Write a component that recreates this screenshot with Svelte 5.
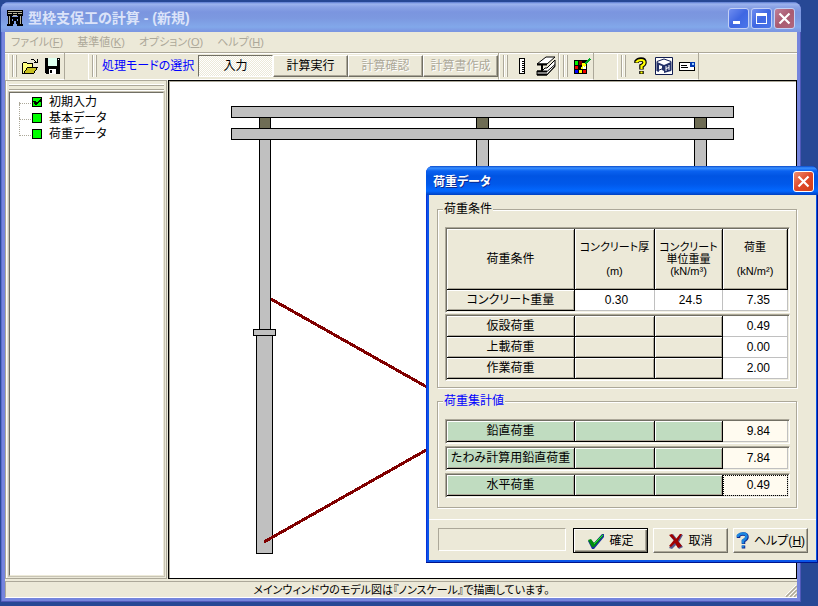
<script>
  const menus = [
    { name: 'ファイル', key: 'F' },
    { name: '基準値', key: 'K' },
    { name: 'オプション', key: 'O' },
    { name: 'ヘルプ', key: 'H' }
  ];
  const modes = [
    { name: '入力', active: true },
    { name: '計算実行' },
    { name: '計算確認', disabled: true },
    { name: '計算書作成', disabled: true }
  ];
  const tree = [
    { name: '初期入力', done: true },
    { name: '基本データ', done: false },
    { name: '荷重データ', done: false }
  ];
  const loads = $state([
    { name: '仮設荷重', value: '0.49' },
    { name: '上載荷重', value: '0.00' },
    { name: '作業荷重', value: '2.00' }
  ]);
  const concrete = $state({ thickness: '0.30', unit: '24.5', load: '7.35' });
  const totals = [
    { name: '鉛直荷重', value: '9.84' },
    { name: 'たわみ計算用鉛直荷重', value: '7.84' },
    { name: '水平荷重', value: '0.49', focused: true }
  ];
</script>

{#snippet columns()}
  <colgroup><col class="c-name" /><col class="c-a" /><col class="c-b" /><col /></colgroup>
{/snippet}

<div class="desktop">
  <main class="window">
    <header class="titlebar">
      <svg class="app-icon" width="16" height="16" viewBox="0 0 16 16" shape-rendering="crispEdges" aria-hidden="true">
        <path fill="#000" d="M0 0h16v6H0zM1 6h4v10H1zM11 6h4v10h-4zM5 7h6v2H5zM6 9h4v2H6zM5 11h2v3H5zM9 11h2v3H9zM0 14h6v2H0zM10 14h6v2h-6z" />
        <path fill="#b9b49c" d="M1 1h14v1H1zM1 3h4v1H1zM6 3h4v1H6zM11 3h4v1h-4zM2 6h1v8H2zM13 6h1v8h-1zM6 5h4v1H6z" />
      </svg>
      <h1>型枠支保工の計算 - (新規)</h1>
      <div class="caption">
        <button aria-label="最小化"><svg width="19" height="19" viewBox="0 0 19 19"><path fill="#fff" d="M4 12h7v3H4z" /></svg></button>
        <button aria-label="最大化"><svg width="19" height="19" viewBox="0 0 19 19" shape-rendering="crispEdges"><path fill="#fff" fill-rule="evenodd" d="M4 4h11v11H4zM5 7v7h9V7z" /></svg></button>
        <button class="close" aria-label="閉じる"><svg width="19" height="19" viewBox="0 0 19 19"><path stroke="#fff" stroke-width="2.2" d="M4.500 4.500l10 10M14.500 4.500l-10 10" /></svg></button>
      </div>
    </header>

    <div class="client">
      <nav class="menu">
        {#each menus as m}
          <button disabled>{m.name}(<u>{m.key}</u>)</button>
        {/each}
      </nav>

      <div class="toolbars">
        <div class="bar first">
          <span class="grip"></span>
          <button class="tool" aria-label="開く">
            <svg width="18" height="18" viewBox="0 0 18 18" shape-rendering="crispEdges">
              <path fill="#ffff80" d="M1 6h4v1h6v4h4l-4 5H1z" />
              <path fill="#c8c020" d="M5 11h10l-3 5H2z" />
              <path fill="none" stroke="#000" d="M.5 16.500v-10l1-1h3l1 1h5v4M.5 16.500h11l4-6h-10l-4 6M8.500 2.500h3l3 3M15.500 2v4M12 5.500h3" />
            </svg>
          </button>
          <button class="tool" aria-label="保存">
            <svg width="18" height="18" viewBox="0 0 18 18" shape-rendering="crispEdges">
              <path fill="#000" d="M1 1h15v16H2l-1-1z" /><path fill="#dfe" d="M4 1h9v8H4z" /><path fill="#fff" d="M5 12h7v5H5zM14 2h1v1h-1z" /><path fill="#000" d="M6 13h2v3H6z" />
            </svg>
          </button>
        </div>

        <div class="bar">
          <span class="grip"></span>
          <span class="caption-text">処理モードの選択</span>
          {#each modes as m}
            <button class="mode" class:active={m.active} disabled={m.disabled}>{m.name}</button>
          {/each}
        </div>

        <div class="bar">
          <span class="grip"></span>
          <button class="tool" aria-label="寸法">
            <svg width="18" height="18" viewBox="0 0 18 18" shape-rendering="crispEdges">
              <path fill="#fff" stroke="#000" d="M6.500 1.500h5v15h-5z" /><path stroke="#000" d="M9 4.500h2M9 6.500h2M9 8.500h2M9 10.500h2M9 12.500h2M9 14.500h2" />
            </svg>
          </button>
          <button class="tool wide" aria-label="鋼材">
            <svg width="20" height="20" viewBox="0 0 20 20">
              <path fill="#fff" stroke="#000" d="M1 8L10 1h9l-8 7z" />
              <path fill="#fff" stroke="#000" d="M1 15h5l3-3h2l8-8v6l-8 9H1z" />
              <path stroke="#000" stroke-width="2" fill="none" d="M1 8.500h10M6 9v7M1 15.500h10M1 18.500h10" />
              <path stroke="#000" fill="none" d="M11 15.500l8-7M11 18.500l8-8" />
            </svg>
          </button>
        </div>

        <div class="bar">
          <span class="grip"></span>
          <button class="tool" aria-label="配色">
            <svg width="18" height="18" viewBox="0 0 18 18" shape-rendering="crispEdges">
              <path fill="#000" d="M1 3h13v14H1z" />
              <path fill="#0e0" d="M2 4h3v4H2z" /><path fill="#800" d="M6 4h3v4H6z" /><path fill="#e00" d="M2 9h3v3H2zM10 13h3v3h-3z" /><path fill="#ff0" d="M6 13h3v3H6zM8 9h2v3H8z" /><path fill="#00f" d="M2 13h3v3H2z" /><path fill="#fff" d="M10 9h3v3h-3z" />
              <path fill="#000" d="M8 10l1-4 2 2z" /><path fill="#ff0" d="M9 6h2l2 2-1 2-3-1z" /><path fill="#0a2" d="M11 6l5-5 2 1-5 6z" />
            </svg>
          </button>
        </div>

        <div class="bar last">
          <span class="grip"></span>
          <button class="tool" aria-label="ヘルプ">
            <svg width="18" height="18" viewBox="0 0 18 18">
              <path fill="none" stroke="#000" stroke-width="4.500" d="M4.500 6V4.500Q6 2.500 9 2.500q3.500 0 3.500 3 0 2-3 3.500v3.500M9.500 14v3" />
              <path fill="none" stroke="#ff0" stroke-width="2.200" d="M4.500 5.500V5Q6 3 9 3q3.500 0 3.500 2.500 0 2-3 3.500v3M9.500 14.500v2" />
            </svg>
          </button>
          <button class="tool" aria-label="製品情報">
            <svg width="18" height="18" viewBox="0 0 18 18">
              <path fill="#fff" stroke="#101c50" d="M.5.5h17v17H.5z" />
              <path fill="#fff" stroke="#101c50" d="M2 4.500L9 2l7 2.500v9L9 11l-7 3z" />
              <path fill="#223068" d="M2 5l7 3v6l-2-1V9L4 8v7l-2-1zM16 5L9 8v8l7-2z" />
              <path stroke="#fff" d="M11 9v5M11 11.500l3-1M14 8v5" />
            </svg>
          </button>
          <button class="tool" aria-label="メール">
            <svg width="18" height="18" viewBox="0 0 18 18" shape-rendering="crispEdges">
              <path fill="#fff" stroke="#000" d="M1.500 5.500h15v8h-15z" /><path stroke="#000" d="M3 8.500h6M3 10.500h7" /><path fill="#0038b0" d="M12 5h5v5h-5z" /><path fill="#9cf" d="M14 6h2v2h-2z" />
            </svg>
          </button>
        </div>
      </div>

      <div class="work">
        <aside class="side">
          <div class="dock-grip"></div>
          <ul class="tree">
            {#each tree as t}
              <li>
                <svg width="10" height="10" viewBox="0 0 10 10" shape-rendering="crispEdges" aria-hidden="true">
                  <path fill="#0f0" stroke="#000" d="M.5.5h9v9h-9z" />
                  {#if t.done}<path fill="none" stroke="#000" stroke-width="2" d="M2 4l2 3 5-4" />{/if}
                </svg>
                <span>{t.name}</span>
              </li>
            {/each}
          </ul>
        </aside>
        <section class="canvas">
          <svg width="100%" height="100%" shape-rendering="crispEdges" aria-label="モデル図">
            <g transform="translate(-170 -82)" stroke="#000" fill="#c0c0c0">
              <path fill="#6f6d55" d="M259.500 117.500h11v11h-11zM476.500 117.500h12v11h-12zM694.500 117.500h12v11h-12z" />
              <path d="M231.500 106.500h502v11h-502zM231.500 128.500h502v11h-502z" />
              <path d="M259.500 139.500h11v190h-11zM476.500 139.500h12v190h-12zM694.500 139.500h12v190h-12z" />
              <path d="M256.500 335.500h16v218h-16zM253.500 329.500h22v6h-22z" />
              <path fill="none" stroke="#800000" stroke-width="3" d="M271 299L480 417M264 542L480 419.500" />
            </g>
          </svg>
        </section>
      </div>

      <footer class="status">
        <span>メインウィンドウのモデル図は『ノンスケール』で描画しています。</span>
        <svg class="size-grip" width="12" height="12" viewBox="0 0 12 12" aria-hidden="true">
          <path stroke="#fff" d="M0 11L11 0M4 11l7-7M8 11l3-3" /><path stroke="#aca899" stroke-width="1.500" d="M1 12L12 1M5 12l7-7M9 12l3-3" />
        </svg>
      </footer>
    </div>
  </main>

  <div class="dialog" role="dialog" aria-labelledby="dlg-title">
    <header class="dlg-title">
      <h2 id="dlg-title">荷重データ</h2>
      <button class="dlg-close" aria-label="閉じる"><svg width="19" height="19" viewBox="0 0 19 19"><path stroke="#fff" stroke-width="2.200" d="M4.500 4.500l10 10M14.500 4.500l-10 10" /></svg></button>
    </header>
    <div class="dlg-body">
      <fieldset>
        <legend>荷重条件</legend>
        <table>
          {@render columns()}
          <thead>
            <tr>
              <th>荷重条件</th>
              <th>コンクリート厚<br /><br />(m)</th>
              <th>コンクリート<br />単位重量<br />(kN/m³)</th>
              <th>荷重<br /><br />(kN/m²)</th>
            </tr>
          </thead>
          <tbody>
            <tr>
              <th>コンクリート重量</th>
              <td><input class="mid" aria-label="コンクリート厚" bind:value={concrete.thickness} /></td>
              <td><input class="mid" aria-label="コンクリート単位重量" bind:value={concrete.unit} /></td>
              <td><input aria-label="コンクリート荷重" bind:value={concrete.load} /></td>
            </tr>
          </tbody>
        </table>
        <table class="next">
          {@render columns()}
          <tbody>
            {#each loads as l}
              <tr>
                <th>{l.name}</th>
                <td class="blank"></td>
                <td class="blank"></td>
                <td><input aria-label={l.name} bind:value={l.value} /></td>
              </tr>
            {/each}
          </tbody>
        </table>
      </fieldset>

      <fieldset class="totals">
        <legend>荷重集計値</legend>
        {#each totals as t}
          <table>
            {@render columns()}
            <tbody>
              <tr>
                <th>{t.name}</th>
                <td class="blank"></td>
                <td class="blank"></td>
                <td class="sum" class:focused={t.focused}>{t.value}</td>
              </tr>
            </tbody>
          </table>
        {/each}
      </fieldset>
    </div>
    <footer class="dlg-foot">
      <div class="message"></div>
      <button class="push default">
        <svg width="18" height="16" viewBox="0 0 18 16" aria-hidden="true"><path fill="#1a2f9c" d="M1 8l3-1 3 3 8-9h2v3L7 16H5z" /><path fill="#008a10" d="M1 7l3-1 3 4 9-9v2L7 14H5z" /><path stroke="#2e3" d="M7 11l9-9" /></svg>
        <span>確定</span>
      </button>
      <button class="push">
        <svg width="16" height="16" viewBox="0 0 16 16" aria-hidden="true"><path fill="#555a90" d="M2 3l3-2 4 5 3-5 3 1-4 7 4 5-4 2-3-4-4 4-3-1 5-7z" /><path fill="#a00000" d="M1 2l3-1 4 5 4-5h2l-4 7 4 5-4 2-3-5-4 4-2-1 5-6z" /></svg>
        <span>取消</span>
      </button>
      <button class="push">
        <svg width="14" height="17" viewBox="0 0 14 17" aria-hidden="true"><path fill="none" stroke="#102a90" stroke-width="3.500" d="M2.500 6V4Q4 2 7 2q4 0 4 3 0 2-3.500 4v3M7.500 13.500v3" /><path fill="none" stroke="#1c86e0" stroke-width="2.500" d="M2 5V3.500Q4 1.500 7 1.500q3.500 0 3.500 3 0 2-3.500 4v3M7 13.500v2" /></svg>
        <span>ヘルプ(<u>H</u>)</span>
      </button>
    </footer>
  </div>
</div>

<style>
  :global(body) { background: #274895; }
  .desktop, .desktop * { box-sizing: border-box; }
  .desktop {
    position: relative;
    display: flex;
    min-height: 100vh;
    padding: 2px 17px 4px 1px;
    background: #274895;
    color: #000;
    font: 12px/14px "Liberation Sans", "Noto Sans CJK JP", sans-serif;
    font-feature-settings: "palt";
  }
  button, input {
    margin: 0;
    padding: 0;
    border: 0;
    background: none;
    color: inherit;
    font: inherit;
    font-feature-settings: inherit;
  }
  svg { display: block; flex: none; }
  h1, h2 { margin: 0; font-weight: bold; white-space: nowrap; }

  /* main window */
  .window {
    flex: 1;
    display: flex;
    flex-direction: column;
    min-width: 0;
    padding: 0 4px 4px 4px;
    border-radius: 8px 8px 0 0;
    background: #7585dd;
    box-shadow: inset -1px -1px #5058b8, inset 1px 0 #5a6ccc;
  }
  .titlebar {
    display: flex;
    align-items: center;
    height: 30px;
    margin: 0 -4px;
    padding: 2px 6px 0 6px;
    border-radius: 8px 8px 0 0;
    background: linear-gradient(#5a7ad0 0, #9db4ee 2px, #8aa3e6 5px, #7b95df 10px, #7c98e0 16px, #82a8ea 25px, #7c97e2 29px);
    color: #dbe3f9;
  }
  .titlebar h1 { flex: 1; margin-left: 5px; font-size: 14px; line-height: 18px; }
  .caption { display: flex; gap: 2px; }
  .caption button, .dlg-close {
    width: 21px;
    height: 21px;
    border: 1px solid #c3d0f5;
    border-radius: 3px;
    background: linear-gradient(135deg, #6f8df0, #3f67e2 50%, #4a76ea);
  }
  .caption .close { background: linear-gradient(135deg, #c08098, #a95a70 50%, #b0667c); }
  .client { flex: 1; display: flex; flex-direction: column; background: #ece9d8; }
  .menu { display: flex; gap: 14px; height: 20px; padding: 0 6px; color: #aca899; font-size: 11px; }
  .menu button { white-space: nowrap; }

  .toolbars {
    display: flex;
    height: 28px;
    border-top: 1px solid #aca899;
    box-shadow: inset 0 1px #fff;
  }
  .bar {
    display: flex;
    align-items: center;
    padding-left: 4px;
    border-right: 1px solid #aca899;
    border-bottom: 1px solid #fff;
    box-shadow: inset 1px 1px #fff;
  }
  .first { margin: 0 23px 0 3px; }
  .last { margin-left: 23px; }
  .grip {
    width: 5px;
    height: 22px;
    margin-right: 3px;
    border: solid #aca899;
    border-width: 0 1px;
    box-shadow: inset 1px 0 #fff, inset -1px 0 #f8f7f0;
  }
  .tool { display: grid; place-items: center; width: 22px; height: 22px; }
  .last .tool { width: 23px; }
  .tool.wide { width: 25px; }
  .caption-text { width: 98px; padding-left: 2px; color: #00f; white-space: nowrap; }
  .mode {
    width: 75px;
    height: 22px;
    border: 1px solid;
    border-color: #fff #716f64 #716f64 #fff;
    box-shadow: inset -1px -1px #aca899;
    white-space: nowrap;
  }
  .mode.active {
    border-color: #716f64 #fff #fff #716f64;
    box-shadow: none;
    background: repeating-conic-gradient(#fff 0 25%, #ece9d8 0 50%) 0 0 / 2px 2px;
  }
  .mode:disabled { color: #aca899; text-shadow: 1px 1px #fff; }

  .work { flex: 1; display: flex; gap: 1px; }
  .side {
    width: 162px;
    display: flex;
    flex-direction: column;
    padding: 4px 2px 2px 3px;
    border: 1px solid #aca899;
    box-shadow: inset 1px 0 #fff;
  }
  .dock-grip {
    height: 5px;
    margin-bottom: 2px;
    border: solid #aca899;
    border-width: 1px 0;
    box-shadow: 0 -1px #fff, 0 1px #fff;
  }
  .tree {
    flex: 1;
    margin: 0;
    padding: 1px 0 0 9px;
    list-style: none;
    background: #fff;
    border: 1px solid;
    border-color: #716f64 #ece9d8 #ece9d8 #716f64;
    outline: 1px solid #c8c4b4;
    outline-offset: 0;
  }
  .tree li { position: relative; display: flex; align-items: center; gap: 7px; height: 16px; padding-left: 13px; }
  .tree li::before {
    content: "";
    position: absolute;
    left: 0;
    top: -8px;
    width: 11px;
    height: 17px;
    border: dotted #aca899;
    border-width: 0 0 1px 1px;
  }
  .tree li:first-child::before { top: 8px; height: 1px; }
  .canvas {
    flex: 1;
    min-width: 0;
    border: 1px solid #000;
    background: #fff;
    box-shadow: inset 1px 1px #aca899;
    padding: 1px 0 0 1px;
    overflow: hidden;
  }
  .canvas svg { height: 0; min-height: 100%; }

  .status {
    position: relative;
    display: flex;
    justify-content: center;
    align-items: center;
    height: 17px;
    margin-top: 2px;
    border: solid;
    border-width: 1px 0 1px 1px;
    border-color: #aca899 #fff #fff #aca899;
    font-size: 11px;
  }
  .status span { white-space: nowrap; }
  .size-grip { position: absolute; right: 0; bottom: 0; }

  /* load data dialog floating over the window */
  .dialog {
    position: absolute;
    left: 426px;
    top: 166px;
    width: 392px;
    padding: 0 2px 3px 3px;
    border-radius: 7px 7px 0 0;
    background: #0a54e8;
    box-shadow: inset -1px -1px #00138c, inset 1px 0 #0831d9;
  }
  .dlg-title {
    display: flex;
    align-items: center;
    height: 29px;
    margin: 0 -2px 0 -3px;
    padding: 2px 4px 0 7px;
    border-radius: 7px 7px 0 0;
    background: linear-gradient(#0848c8 0, #3a90ff 2px, #0a62f0 5px, #0054e3 10px, #0058ea 18px, #0368ff 25px, #0040c0 29px);
    color: #fff;
  }
  .dlg-title h2 { flex: 1; font-size: 12px; line-height: 18px; text-shadow: 1px 1px #0a2a90; }
  .dlg-close { border-color: #fff; background: linear-gradient(135deg, #f09070, #e0482a 50%, #d04018); }
  .dlg-body {
    padding: 7px 19px 11px 8px;
    background: #ece9d8;
  }
  fieldset {
    min-width: 0;
    margin: 0;
    padding: 11px 6px 6px 7px;
    border: 1px solid #aca899;
    box-shadow: inset 1px 1px #fff, 1px 1px #fff;
  }
  legend { padding: 0 1px; margin-left: -2px; line-height: 14px; background: #ece9d8; }
  .totals { margin-top: 6px; padding-bottom: 9px; }
  .totals legend { color: #00f; }

  table {
    width: 100%;
    table-layout: fixed;
    border-collapse: separate;
    border-spacing: 0;
    border: 1px solid;
    border-color: #aca899 #fff #fff #aca899;
    box-shadow: inset 1px 1px #716f64, inset -1px -1px #f1efe2;
    padding: 1px;
  }
  .next { margin-top: 1px; }
  .totals table + table { margin-top: 2px; }
  .c-name { width: 128px; }
  .c-a { width: 80px; }
  .c-b { width: 68px; }
  th, td { height: 21px; padding: 0; line-height: 12px; white-space: nowrap; }
  th, .blank {
    border: solid #000;
    border-width: 0 1px 1px 0;
    background: #ece9d8;
    box-shadow: inset 1px 1px #fff, inset -1px -1px #aca899;
    font-weight: normal;
    text-align: center;
  }
  thead th { height: 61px; }
  thead th + th { font-size: 11px; }
  td { background: #fff; border: solid #c0c0c0; border-width: 0 1px 1px 0; }
  td input { display: block; width: 100%; height: 20px; padding-right: 17px; text-align: right; outline: 0; }
  td input.mid { padding: 0 0 0 4px; text-align: center; }
  .totals th, .totals .blank { background: #c0dcc0; }
  .sum { padding-right: 17px; background: #fffbf0; text-align: right; }
  .focused { outline: 1px dotted #000; outline-offset: -1px; }

  .dlg-foot {
    display: flex;
    gap: 5px;
    padding: 8px 8px 7px 9px;
    border-top: 1px solid #fff;
    background: #ece9d8;
  }
  .message {
    flex: 1;
    margin-right: 2px;
    height: 23px;
    border: 1px solid;
    border-color: #aca899 #fff #fff #aca899;
  }
  .push {
    display: flex;
    align-items: center;
    justify-content: center;
    gap: 4px;
    width: 75px;
    height: 25px;
    border: 1px solid;
    border-color: #fff #716f64 #716f64 #fff;
    box-shadow: inset -1px -1px #aca899;
    white-space: nowrap;
  }
  .default { border-color: #000; box-shadow: inset 1px 1px #fff, inset -1px -1px #716f64, inset -2px -2px #aca899; }
</style>
